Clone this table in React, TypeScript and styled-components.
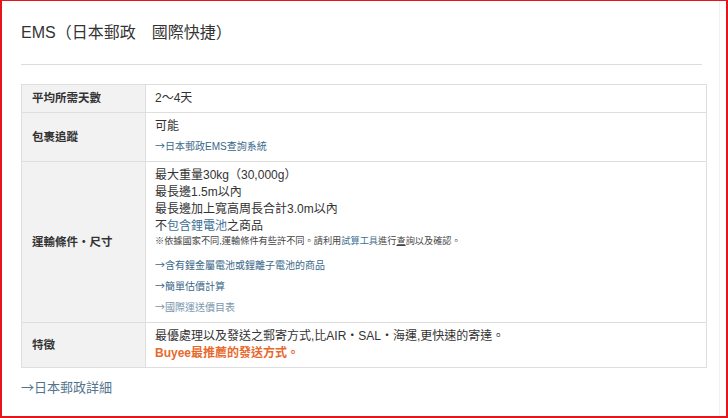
import React from "react";
import styled, {createGlobalStyle} from "styled-components";

const GlobalStyle = createGlobalStyle`
    html, body {
        margin: 0;
        padding: 0;
        background: #ffffff;
    }
    body {
        font-family: "Liberation Sans", "Noto Sans CJK TC", sans-serif;
        color: #333333;
    }
`;

const Frame = styled.div`
    box-sizing: border-box;
    height: 418px;
    width: 728px;
    border: 2px solid #e8141b;
    border-top-width: 1px;
    background: #ffffff;
    overflow: hidden;
`;

const Page = styled.div`
    box-sizing: border-box;
    height: 100%;
    padding: 20px 17px 0 19px;
    border-right: 1px solid #f1f1f1;
    margin-right: 6px;
`;

const Title = styled.h2`
    margin: 0;
    font-size: 16px;
    font-weight: normal;
    line-height: 24px;
    color: #333333;
`;

const Rule = styled.hr`
    margin: 19px 0 19px;
    border: none;
    border-top: 1px solid #dcdcdc;
    height: 0;
`;

const Table = styled.table`
    width: 686px;
    border-collapse: collapse;
    border: 1px solid #dedede;
    font-size: 12px;
    line-height: 17px;
`;

const Head = styled.th`
    width: 113px;
    padding: 5px 0 5px 10px;
    background: #f2f2f2;
    border: 1px solid #dedede;
    text-align: left;
    vertical-align: middle;
    font-size: 11.5px;
    font-weight: bold;
    color: #333333;
`;

const Cell = styled.td`
    padding: 5px 9px;
    border: 1px solid #dedede;
    vertical-align: top;
    color: #333333;
`;

const Line = styled.div`
    height: 17px;
    line-height: 17px;
`;

const Note = styled.div`
    height: 12px;
    font-size: 9.2px;
    line-height: 12px;
    color: #444444;
`;

const Blue = styled.span`
    color: #3d6f93;
`;

const Under = styled.span`
    text-decoration: underline;
`;

const Arrow = styled.span`
    font-family: "Noto Sans CJK TC", sans-serif;
`;

const LinkLine = styled.a<{$faded?: boolean; $gap?: number}>`
    display: block;
    height: 15px;
    margin-top: ${(p) => p.$gap ?? 0}px;
    padding: 3px 0;
    font-size: 10px;
    line-height: 15px;
    color: ${(p) => (p.$faded ? "#7896ad" : "#3a6889")};
    text-decoration: none;
`;

const Strong = styled.div`
    height: 17px;
    line-height: 17px;
    font-weight: bold;
    color: #e8692d;
`;

const FooterLink = styled.a`
    display: block;
    margin-top: 10px;
    font-size: 13px;
    line-height: 18px;
    color: #52748e;
    text-decoration: none;
`;

export default function App() {
    return (
        <>
            <GlobalStyle />
            <Frame>
                <Page>
                    <Title>EMS（日本郵政　國際快捷）</Title>
                    <Rule />
                    <Table>
                        <tbody>
                            <tr>
                                <Head>平均所需天數</Head>
                                <Cell>
                                    <Line>2～4天</Line>
                                </Cell>
                            </tr>
                            <tr>
                                <Head>包裹追蹤</Head>
                                <Cell>
                                    <Line>可能</Line>
                                    <LinkLine>
                                        <Arrow>→</Arrow>日本郵政EMS查詢系統
                                    </LinkLine>
                                </Cell>
                            </tr>
                            <tr>
                                <Head>運輸條件・尺寸</Head>
                                <Cell>
                                    <Line>最大重量30kg（30,000g）</Line>
                                    <Line>最長邊1.5m以內</Line>
                                    <Line>最長邊加上寬高周長合計3.0m以內</Line>
                                    <Line>
                                        不<Blue>包含鋰電池</Blue>之商品
                                    </Line>
                                    <Note>
                                        ※依據國家不同,運輸條件有些許不同。請利用<Blue>試算工具</Blue>進行<Under>查</Under>詢以及確認。
                                    </Note>
                                    <LinkLine $gap={7}>
                                        <Arrow>→</Arrow>含有鋰金屬電池或鋰離子電池的商品
                                    </LinkLine>
                                    <LinkLine>
                                        <Arrow>→</Arrow>簡單估價計算
                                    </LinkLine>
                                    <LinkLine $faded>
                                        <Arrow>→</Arrow>國際運送價目表
                                    </LinkLine>
                                </Cell>
                            </tr>
                            <tr>
                                <Head>特徵</Head>
                                <Cell>
                                    <Line>最優處理以及發送之郵寄方式,比AIR・SAL・海運,更快速的寄達。</Line>
                                    <Strong>Buyee最推薦的發送方式。</Strong>
                                </Cell>
                            </tr>
                        </tbody>
                    </Table>
                    <FooterLink>
                        <Arrow>→</Arrow>日本郵政詳細
                    </FooterLink>
                </Page>
            </Frame>
        </>
    );
}
